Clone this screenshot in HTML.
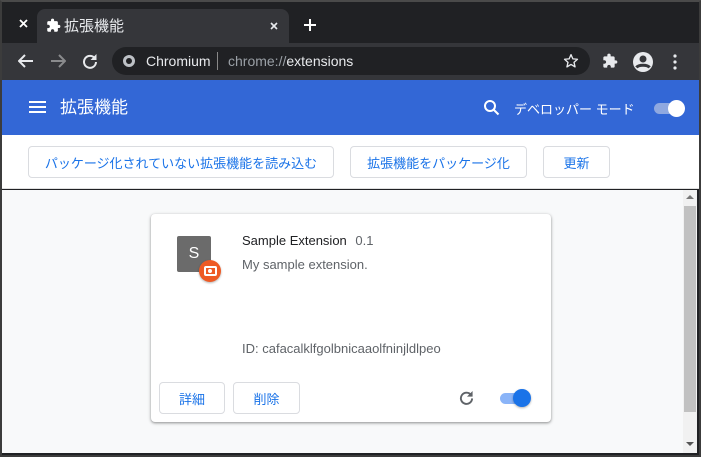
<!DOCTYPE html>
<html><head><meta charset="utf-8"><style>
*{box-sizing:border-box;margin:0;padding:0}
body{width:701px;height:457px;background:#202124;font-family:"Liberation Sans","Noto Sans CJK JP",sans-serif;position:relative;overflow:hidden}
.abs{position:absolute}
.btn{position:absolute;border:1px solid #dadce0;border-radius:4px;background:#fff;color:#1a73e8;font-size:13px;display:flex;align-items:center;justify-content:center}
</style></head><body>
<div class="abs" style="left:0;top:0;width:701px;height:457px;border:2px solid #3c3c3c;border-top-color:#4a4a4a"></div>
<div class="abs" style="left:2px;top:2px;width:697px;height:41px;background:#202124"></div>
<svg class="abs" style="left:19px;top:19px" width="9" height="9" viewBox="0 0 9 9"><path d="M1 1l7 7M8 1l-7 7" stroke="#fff" stroke-width="1.8"/></svg>
<div class="abs" style="left:37px;top:9px;width:252px;height:34px;background:#35363a;border-radius:8px 8px 0 0"></div>
<svg class="abs" style="left:46px;top:18px" width="15" height="15" viewBox="0 0 24 24"><path fill="#fff" d="M20.5 11H19V7c0-1.1-.9-2-2-2h-4V3.5a2.5 2.5 0 0 0-5 0V5H4c-1.1 0-2 .9-2 2v3.8h1.5c1.5 0 2.7 1.2 2.7 2.7S5 16.2 3.5 16.2H2V20c0 1.1.9 2 2 2h3.8v-1.5c0-1.5 1.2-2.7 2.7-2.7s2.7 1.2 2.7 2.7V22H17c1.1 0 2-.9 2-2v-4h1.5a2.5 2.5 0 0 0 0-5z"/></svg>
<div class="abs" style="left:64px;top:15px;color:#e8eaed;font-size:15px">拡張機能</div>
<svg class="abs" style="left:270px;top:22px" width="8" height="8" viewBox="0 0 8 8"><path d="M1 1l6 6M7 1l-6 6" stroke="#e8eaed" stroke-width="1.6"/></svg>
<svg class="abs" style="left:304px;top:19px" width="12" height="12" viewBox="0 0 12 12"><path d="M6 0v12M0 6h12" stroke="#fff" stroke-width="2"/></svg>
<div class="abs" style="left:2px;top:43px;width:697px;height:37px;background:#35363a"></div>
<svg class="abs" style="left:18px;top:54px" width="16" height="14" viewBox="0 0 16 14"><path d="M15 7H2M7 1L1 7l6 6" stroke="#e8eaed" stroke-width="2" fill="none"/></svg>
<svg class="abs" style="left:50px;top:54px" width="16" height="14" viewBox="0 0 16 14"><path d="M1 7h13M9 1l6 6-6 6" stroke="#8a8b8d" stroke-width="2" fill="none"/></svg>
<svg class="abs" style="left:82px;top:53px" width="16" height="16" viewBox="0 0 16 16"><path d="M13 5.5A6 6 0 1 0 14 9" stroke="#e8eaed" stroke-width="2" fill="none"/><path d="M14.5 1v6h-6z" fill="#e8eaed"/></svg>
<div class="abs" style="left:112px;top:47px;width:478px;height:28px;background:#202124;border-radius:14px"></div>
<div class="abs" style="left:123px;top:55px;width:12px;height:12px;border-radius:50%;border:3px solid #bdc1c6"></div>
<div class="abs" style="left:146px;top:53px;color:#e8eaed;font-size:14px">Chromium</div>
<div class="abs" style="left:217px;top:52px;width:1px;height:18px;background:#888"></div>
<div class="abs" style="left:228px;top:53px;color:#9aa0a6;font-size:14px">chrome://<span style="color:#e8eaed">extensions</span></div>
<svg class="abs" style="left:563px;top:53px" width="16" height="16" viewBox="0 0 24 24"><path d="M12 2.5l2.8 6.3 6.9.6-5.2 4.6 1.6 6.8L12 17.2l-6.1 3.6 1.6-6.8-5.2-4.6 6.9-.6z" stroke="#e8eaed" stroke-width="2" fill="none" stroke-linejoin="round"/></svg>
<svg class="abs" style="left:602px;top:53px" width="16" height="16" viewBox="0 0 24 24"><path fill="#e8eaed" d="M20.5 11H19V7c0-1.1-.9-2-2-2h-4V3.5a2.5 2.5 0 0 0-5 0V5H4c-1.1 0-2 .9-2 2v3.8h1.5c1.5 0 2.7 1.2 2.7 2.7S5 16.2 3.5 16.2H2V20c0 1.1.9 2 2 2h3.8v-1.5c0-1.5 1.2-2.7 2.7-2.7s2.7 1.2 2.7 2.7V22H17c1.1 0 2-.9 2-2v-4h1.5a2.5 2.5 0 0 0 0-5z"/></svg>
<svg class="abs" style="left:632px;top:51px" width="22" height="22" viewBox="0 0 22 22"><circle cx="11" cy="11" r="10" fill="#e8eaed"/><circle cx="11" cy="8" r="3.5" fill="#35363a"/><path d="M4.5 16.5c2-3 11-3 13 0" stroke="#35363a" stroke-width="3" fill="none"/></svg>
<svg class="abs" style="left:673px;top:54px" width="4" height="16" viewBox="0 0 4 16"><circle cx="2" cy="2" r="1.6" fill="#e8eaed"/><circle cx="2" cy="8" r="1.6" fill="#e8eaed"/><circle cx="2" cy="14" r="1.6" fill="#e8eaed"/></svg>
<div class="abs" style="left:2px;top:80px;width:697px;height:55px;background:#3367d6"></div>
<div class="abs" style="left:29px;top:101px;width:17px;height:2px;background:#fff;box-shadow:0 5px 0 #fff,0 10px 0 #fff"></div>
<div class="abs" style="left:60px;top:97px;color:#fff;font-size:17px;line-height:22px">拡張機能</div>
<svg class="abs" style="left:483px;top:99px" width="18" height="18" viewBox="0 0 18 18"><circle cx="7" cy="7" r="5" stroke="#fff" stroke-width="2" fill="none"/><path d="M10.5 10.5l5 5" stroke="#fff" stroke-width="2"/></svg>
<div class="abs" style="left:514px;top:99px;color:#fff;font-size:13px">デベロッパー モード</div>
<div class="abs" style="left:654px;top:103px;width:30px;height:11px;border-radius:6px;background:#8fa8e0"></div>
<div class="abs" style="left:668px;top:100px;width:17px;height:17px;border-radius:50%;background:#fff"></div>
<div class="abs" style="left:2px;top:135px;width:697px;height:54px;background:#fff;border-bottom:1px solid #e0e0e0"></div>
<div class="btn" style="left:28px;top:146px;width:306px;height:32px">パッケージ化されていない拡張機能を読み込む</div>
<div class="btn" style="left:350px;top:146px;width:177px;height:32px">拡張機能をパッケージ化</div>
<div class="btn" style="left:543px;top:146px;width:67px;height:32px">更新</div>
<div class="abs" style="left:2px;top:190px;width:681px;height:263px;background:#f8f9fa"></div>
<div class="abs" style="left:683px;top:190px;width:14px;height:263px;background:#f1f1f1"></div>
<div class="abs" style="left:684px;top:206px;width:12px;height:206px;background:#c1c1c1"></div>
<div class="abs" style="left:686px;top:195px;border:4px solid transparent;border-bottom-color:#777;border-top:0"></div>
<div class="abs" style="left:686px;top:442px;border:4px solid transparent;border-top-color:#555;border-bottom:0"></div>
<div class="abs" style="left:151px;top:214px;width:400px;height:208px;background:#fff;border-radius:4px;box-shadow:0 1px 2px rgba(0,0,0,.3),0 1px 3px 1px rgba(0,0,0,.12)"></div>
<div class="abs" style="left:177px;top:236px;width:34px;height:36px;background:#6b6b6b;border-radius:2px;color:#fff;font-size:16px;text-align:center;line-height:36px">S</div>
<div class="abs" style="left:199px;top:260px;width:22px;height:22px;border-radius:50%;background:#ee5a24;box-shadow:0 1px 2px rgba(0,0,0,.3)"></div>
<div class="abs" style="left:204px;top:266px;width:13px;height:10px;border:2px solid #fff;border-radius:2px"></div>
<div class="abs" style="left:208px;top:269px;width:4px;height:4px;background:#fff;border-radius:50%"></div>
<div class="abs" style="left:242px;top:233px;color:#202124;font-size:13px">Sample Extension <span style="color:#5f6368;margin-left:5px">0.1</span></div>
<div class="abs" style="left:242px;top:257px;color:#5f6368;font-size:13px">My sample extension.</div>
<div class="abs" style="left:242px;top:341px;color:#5f6368;font-size:13px">ID: cafacalklfgolbnicaaolfninjldlpeo</div>
<div class="btn" style="left:159px;top:382px;width:66px;height:32px">詳細</div>
<div class="btn" style="left:233px;top:382px;width:67px;height:32px">削除</div>
<svg class="abs" style="left:459px;top:390px" width="15" height="15" viewBox="0 0 16 16"><path d="M13 5.5A6 6 0 1 0 14 9" stroke="#5f6368" stroke-width="2" fill="none"/><path d="M14.5 1v6h-6z" fill="#5f6368"/></svg>
<div class="abs" style="left:500px;top:393px;width:30px;height:11px;border-radius:6px;background:#8ab4f8"></div>
<div class="abs" style="left:513px;top:389px;width:18px;height:18px;border-radius:50%;background:#1a73e8;box-shadow:0 1px 2px rgba(0,0,0,.3)"></div>
</body></html>
